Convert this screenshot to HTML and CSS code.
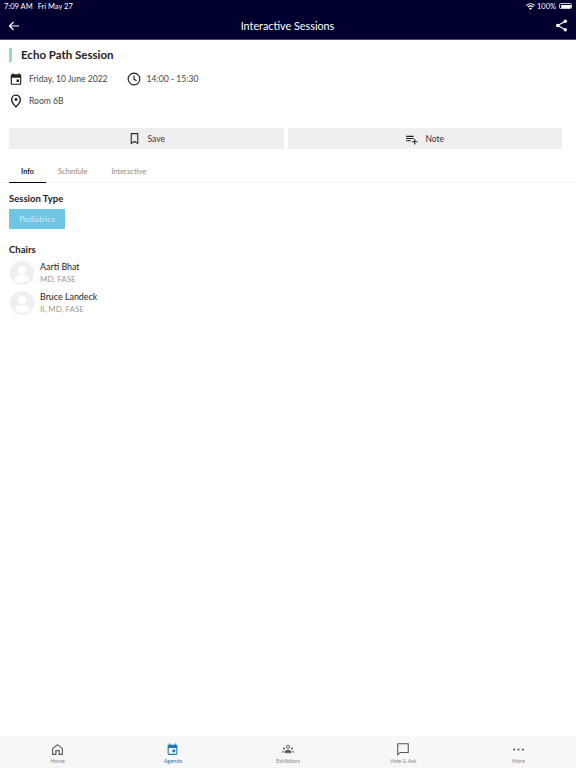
FILE: index.html
```html
<!DOCTYPE html>
<html lang="en">
<head>
    <meta charset="UTF-8">
    <meta name="viewport" content="width=device-width, initial-scale=1.0">
    <title>Interactive Sessions</title>
    <link rel="stylesheet" href="styles.css">
</head>
<body>
    <div class="app">
        <header class="header">
            <div class="status-bar">
                <div class="status-left"><span>7:09 AM</span><span>Fri May 27</span></div>
                <div class="status-right">
                    <svg width="9" height="7" viewBox="0 0 18 14"><path d="M9 14 6 10.6a4.5 4.5 0 0 1 6 0zM4.6 9 2.8 7a9.4 9.4 0 0 1 12.4 0l-1.8 2a6.8 6.8 0 0 0-8.8 0zM1.5 5.6 0 3.9a13.4 13.4 0 0 1 18 0l-1.5 1.7a11.2 11.2 0 0 0-15 0z" fill="#fff"/></svg>
                    <span>100%</span>
                    <span class="battery"><span class="battery-fill"></span></span>
                </div>
            </div>
            <div class="nav-bar">
                <svg class="icon" width="12" height="12" viewBox="0 0 24 24"><path d="M22 12H3M11 4l-8 8 8 8" fill="none" stroke="#fff" stroke-width="2.4"/></svg>
                <div class="nav-title">Interactive Sessions</div>
                <svg class="icon" width="13" height="13" viewBox="0 0 24 24"><path d="M19 4 5 12l14 8" fill="none" stroke="#fff" stroke-width="2"/><circle cx="19" cy="4" r="3.2" fill="#fff"/><circle cx="5" cy="12" r="3.2" fill="#fff"/><circle cx="19" cy="20" r="3.2" fill="#fff"/></svg>
            </div>
        </header>

        <main class="content">
            <div class="session">
                <h1 class="session-title">Echo Path Session</h1>
                <div class="meta-row">
                    <span class="meta-item">
                        <svg width="14" height="14" viewBox="0 0 24 24"><path d="M19 4h-1V2h-2v2H8V2H6v2H5a2 2 0 0 0-2 2v14a2 2 0 0 0 2 2h14a2 2 0 0 0 2-2V6a2 2 0 0 0-2-2zm0 16H5V10h14zM13 13h4v4h-4z" fill="#222"/></svg>
                        Friday, 10 June 2022
                    </span>
                    <span class="meta-item">
                        <svg width="14" height="14" viewBox="0 0 24 24"><circle cx="12" cy="12" r="10" fill="none" stroke="#222" stroke-width="2"/><path d="M12 6v6.5l4.5 2.5" fill="none" stroke="#222" stroke-width="2"/></svg>
                        14:00 - 15:30
                    </span>
                </div>
                <div class="meta-row">
                    <span class="meta-item">
                        <svg width="14" height="14" viewBox="0 0 24 24"><path d="M12 2a7.5 7.5 0 0 0-7.5 7.5C4.500 15 12 22 12 22s7.500-7 7.500-12.500A7.500 7.500 0 0 0 12 2z" fill="none" stroke="#222" stroke-width="2.400"/><circle cx="12" cy="9.500" r="2.500" fill="#222"/></svg>
                        Room 6B
                    </span>
                </div>
            </div>

            <div class="actions">
                <button class="action-btn">
                    <svg width="13" height="13" viewBox="0 0 24 24"><path d="M6 3h12v18l-6-3.500L6 21z" fill="none" stroke="#222" stroke-width="2"/></svg>
                    Save
                </button>
                <button class="action-btn">
                    <svg width="13" height="13" viewBox="0 0 24 24"><path d="M2 7h14v2H2zM2 11h14v2H2zM2 15h9v2H2zM17 13h2v4h4v2h-4v4h-2v-4h-4v-2h4z" fill="#222"/></svg>
                    Note
                </button>
            </div>

            <nav class="tabs">
                <a class="tab tab-active">Info</a>
                <a class="tab">Schedule</a>
                <a class="tab">Interactive</a>
            </nav>

            <section class="details">
                <h2 class="section-title">Session Type</h2>
                <span class="tag">Pediatrics</span>

                <h2 class="section-title chairs-title">Chairs</h2>
                <div class="person">
                    <svg class="avatar" width="24" height="24" viewBox="0 0 24 24"><circle cx="12" cy="12" r="12" fill="#efefef"/><circle cx="12" cy="9" r="4.300" fill="#fff"/><path d="M4.500 19c1-3.500 4-5 7.500-5s6.500 1.500 7.500 5a11 11 0 0 1-15 0z" fill="#fff"/></svg>
                    <div>
                        <div class="person-name">Aarti Bhat</div>
                        <div class="person-role">MD, FASE</div>
                    </div>
                </div>
                <div class="person">
                    <svg class="avatar" width="24" height="24" viewBox="0 0 24 24"><circle cx="12" cy="12" r="12" fill="#efefef"/><circle cx="12" cy="9" r="4.300" fill="#fff"/><path d="M4.500 19c1-3.500 4-5 7.500-5s6.500 1.500 7.500 5a11 11 0 0 1-15 0z" fill="#fff"/></svg>
                    <div>
                        <div class="person-name">Bruce Landeck</div>
                        <div class="person-role">II, MD, FASE</div>
                    </div>
                </div>
            </section>
        </main>

        <footer class="tab-bar">
            <div class="tab-item">
                <svg width="13" height="13" viewBox="0 0 24 24"><path d="M3 10.500 12 3l9 7.500V21h-6v-7H9v7H3z" fill="none" stroke="#555" stroke-width="2"/></svg>
                <span>Home</span>
            </div>
            <div class="tab-item tab-item-active">
                <svg width="13" height="13" viewBox="0 0 24 24"><path d="M19 3h-1V1h-2v2H8V1H6v2H5a2 2 0 0 0-2 2v15a2 2 0 0 0 2 2h14a2 2 0 0 0 2-2V5a2 2 0 0 0-2-2zm0 17H5V9h14zM12 12h5v5h-5z" fill="#1f78b4"/><path d="M5 5h14v4H5z" fill="#1f78b4"/></svg>
                <span>Agenda</span>
            </div>
            <div class="tab-item">
                <svg width="14" height="13" viewBox="0 0 24 24"><circle cx="12" cy="7" r="3" fill="none" stroke="#555" stroke-width="1.800"/><circle cx="4.500" cy="10" r="1.800" fill="#555"/><circle cx="19.500" cy="10" r="1.800" fill="#555"/><path d="M1 18c0-2 2-3 3.500-3M23 18c0-2-2-3-3.500-3M6 18c0-3 3-5 6-5s6 2 6 5z" fill="#555" stroke="#555" stroke-width="1.200"/></svg>
                <span>Exhibitors</span>
            </div>
            <div class="tab-item">
                <svg width="14" height="14" viewBox="0 0 24 24"><path d="M3 3h18v15H7l-4 4z" fill="none" stroke="#555" stroke-width="1.800"/></svg>
                <span>Vote &amp; Ask</span>
            </div>
            <div class="tab-item">
                <svg width="13" height="13" viewBox="0 0 24 24"><circle cx="4" cy="12" r="2" fill="#555"/><circle cx="12" cy="12" r="2" fill="#555"/><circle cx="20" cy="12" r="2" fill="#555"/></svg>
                <span>More</span>
            </div>
        </footer>
    </div>
</body>
</html>
```

FILE: styles.css
```css
:root {
    --navy: #00002e;
    --text-color: #222;
    --muted: #999;
    --accent: #6fc5e6;
    --button-bg: #efeff1;
}

* {
    box-sizing: border-box;
}

body {
    margin: 0;
    font-family: 'Lato', 'Open Sans', sans-serif;
    color: var(--text-color);
    background-color: white;
}

.app {
    display: flex;
    flex-direction: column;
    height: 768px;
    overflow: hidden;
}

.header {
    flex-shrink: 0;
    height: 40px;
    background-color: var(--navy);
    border-bottom: 1px solid #4a4a72;
    color: white;
}

.status-bar {
    display: flex;
    justify-content: space-between;
    align-items: center;
    height: 12px;
    padding: 0 4px;
    font-size: 7.5px;
}

.status-left {
    display: flex;
    gap: 5px;
}

.status-right {
    display: flex;
    align-items: center;
    gap: 2px;
}

.battery {
    width: 13px;
    height: 6px;
    margin-left: 1px;
    padding: 0.5px;
    border-radius: 1.500px;
    border: 0.500px solid #ccc;
}

.battery-fill {
    display: block;
    height: 100%;
    background-color: white;
    border-radius: 1px;
}

.nav-bar {
    display: flex;
    justify-content: space-between;
    align-items: center;
    height: 27px;
    padding: 0 8px;
}

.nav-title {
    font-size: 10.8px;
}

.content {
    flex: 1;
}

.session {
    padding: 8px 9px 0;
}

.session-title {
    margin: 0 0 6px;
    padding-left: 9px;
    border-left: 3px solid #9ad3e0;
    font-size: 11.500px;
    font-weight: 700;
    line-height: 14px;
}

.meta-row {
    display: flex;
    align-items: center;
    gap: 19px;
    height: 22px;
    font-size: 8.600px;
    color: #444;
}

.meta-item {
    display: flex;
    align-items: center;
    gap: 6px;
}

.meta-item svg {
    flex-shrink: 0;
}

.actions {
    display: flex;
    gap: 4px;
    margin-top: 16px;
    padding: 0 14px 0 9px;
}

.action-btn {
    flex: 1;
    display: flex;
    justify-content: center;
    align-items: center;
    gap: 7px;
    height: 21px;
    border: none;
    background-color: var(--button-bg);
    font-family: inherit;
    font-size: 8.500px;
    color: #333;
}

.tabs {
    display: flex;
    height: 23px;
    margin-top: 11px;
    padding-left: 9px;
    border-bottom: 1px solid #f4f4f5;
    font-size: 7.400px;
    color: #888;
}

.tab {
    display: flex;
    align-items: center;
    justify-content: center;
    height: 23px;
    padding: 0 12px;
}

.tab-active {
    color: var(--text-color);
    font-weight: 700;
    border-bottom: 1px solid var(--navy);
}

.details {
    padding: 9px 9px 0;
}

.section-title {
    margin: 0 0 4px;
    font-size: 9.500px;
    font-weight: 700;
    line-height: 13px;
}

.tag {
    display: block;
    width: 56px;
    height: 20px;
    background-color: var(--accent);
    border-radius: 1px;
    color: #cdeef9;
    font-size: 8.400px;
    line-height: 20px;
    text-align: center;
}

.chairs-title {
    margin: 14px 0 5px;
}

.person {
    display: flex;
    align-items: center;
    gap: 6px;
    height: 24px;
    margin-bottom: 6px;
    padding-left: 1px;
}

.person-name {
    font-size: 8.900px;
    line-height: 12px;
}

.person-role {
    font-size: 8px;
    line-height: 12px;
    color: var(--muted);
}

.tab-bar {
    display: grid;
    grid-template-columns: repeat(5, 1fr);
    flex-shrink: 0;
    height: 32px;
    background-color: #f7f7f8;
}

.tab-item {
    display: flex;
    flex-direction: column;
    align-items: center;
    justify-content: flex-end;
    gap: 2px;
    padding-bottom: 4px;
    font-size: 5.500px;
    color: #888;
}

.tab-item-active {
    color: #1f78b4;
}
```
